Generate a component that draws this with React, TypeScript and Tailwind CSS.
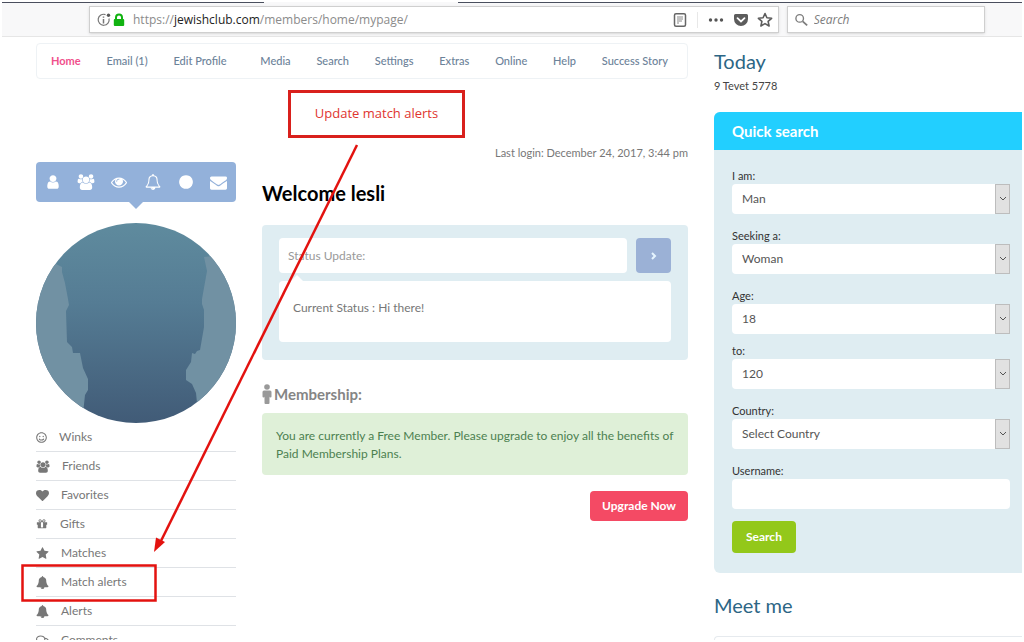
import type { ReactNode } from "react";
import { FaRegComments, FaRegSmile } from "react-icons/fa";

const BELL_BODY =
  "q0 52-38 90t-90 38h-448q0 106-75 181t-181 75-181-75-75-181h-448q-52 0-90-38t-38-90q50-42 91-88t85-119.500 74.500-158.500 50-206 19.500-260q0-152 117-282.500t307-158.500q-8-19-8-39 0-40 28-68t68-28 68 28 28 68q0 20-8 39 190 28 307 158.500t117 282.500q0 139 19.500 260t50 206 74.500 158.500 85 119.500 91 88z";
const BELL_CLAPPER =
  "M912 1696q0-16-16-16-59 0-101.500-42.500t-42.500-101.500q0-16-16-16t-16 16q0 73 51.500 124.500t124.500 51.500q16 0 16-16z";

const PATHS = {
  user: "M1536 1399q0 109-62.500 187t-150.500 78h-854q-88 0-150.500-78t-62.500-187q0-85 8.500-160.500t31.500-152 58.500-131 94-89 134.500-34.500q131 128 313 128t313-128q76 0 134.500 34.500t94 89 58.500 131 31.500 152 8.500 160.500zm-256-887q0 159-112.500 271.500t-271.500 112.500-271.500-112.500-112.500-271.500 112.500-271.500 271.500-112.500 271.500 112.500 112.500 271.500z",
  users:
    "M657 896q-162 5-265 128h-134q-82 0-138-40.500t-56-118.500q0-353 124-353 6 0 43.500 21t97.500 42.500 119 21.500q67 0 133-23-5 37-5 66 0 139 81 256zM1728 1533q0 120-73 189.500t-194 69.500h-874q-121 0-194-69.500t-73-189.500q0-53 3.500-103.500t14-109 26.500-108.500 43-97.500 62-81 85.500-53.500 111.500-20q10 0 43 21.500t73 48 107 48 135 21.500 135-21.500 107-48 73-48 43-21.500q61 0 111.500 20t85.500 53.500 62 81 43 97.500 26.500 108.500 14 109 3.500 103.500zM704 256q0 106-75 181t-181 75-181-75-75-181 75-181 181-75 181 75 75 181zM1408 640q0 159-112.500 271.500t-271.500 112.500-271.500-112.500-112.500-271.500 112.500-271.500 271.500-112.500 271.500 112.500 112.500 271.500zM1984 865q0 78-56 118.500t-138 40.500h-134q-103-123-265-128 81-117 81-256 0-29-5-66 66 23 133 23 59 0 119-21.500t97.500-42.500 43.500-21q124 0 124 353zM1856 256q0 106-75 181t-181 75-181-75-75-181 75-181 181-75 181 75 75 181z",
  eye: "M1664 960q-152-236-381-353 61 104 61 225 0 185-131.500 316.500t-316.500 131.500-316.500-131.500-131.500-316.500q0-121 61-225-229 117-381 353 133 205 333.500 326.500t434.500 121.500 434.500-121.500 333.500-326.500zm-720-384q0-20-14-34t-34-14q-125 0-214.500 89.500t-89.500 214.500q0 20 14 34t34 14 34-14 14-34q0-86 61-147t147-61q20 0 34-14t14-34zm848 384q0 34-20 69-140 230-376.500 368.500t-499.500 138.500-499.500-139-376.500-368q-20-35-20-69t20-69q140-229 376.500-368t499.500-139 499.500 139 376.500 368q20 35 20 69z",
  bellOutline:
    BELL_CLAPPER +
    "m-666-288h1300q-266-300-266-832 0-51-24-105t-69-103-121.500-80.500-169.500-31.500-169.500 31.500-121.500 80.500-69 103-24 105q0 532-266 832zm1482 0" +
    BELL_BODY,
  bell: BELL_CLAPPER + "m816-288" + BELL_BODY,
  circle:
    "M1664 896q0 209-103 385.500t-279.500 279.500-385.500 103-385.500-103-279.500-279.500-103-385.500 103-385.500 279.500-279.500 385.500-103 385.500 103 279.500 279.500 103 385.500z",
  envelope:
    "M1792 710v794q0 66-47 113t-113 47h-1472q-66 0-113-47t-47-113v-794q44 49 101 87 362 246 497 345 57 42 92.500 65.500t94.500 48 110 24.500h2q51 0 110-24.500t94.500-48 92.500-65.500q170-123 498-345 57-39 100-87zm0-294q0 79-49 151t-122 123q-376 261-468 325-10 7-42.500 31t-54 38.500-52 32.500-57.500 27-50 9h-2q-23 0-50-9t-57.500-27-52-32.500-54-38.500-42.500-31q-91-64-262-182.500t-205-142.500q-62-42-117-115.500t-55-136.500q0-78 41.500-130t118.500-52h1472q65 0 112.500 47t47.500 113z",
  heart:
    "M896 1664q-26 0-44-18l-624-602q-10-8-27.500-26t-55.500-65.500-68-97.500-53.500-121-23.500-138q0-220 127-344t351-124q62 0 126.500 21.500t120 58 95.500 68.500 76 68q36-36 76-68t95.500-68.500 120-58 126.500-21.500q224 0 351 124t127 344q0 221-229 450l-623 600q-18 18-44 18z",
  gift: "M1056 1356v-716h-320v716q0 25 18 38.500t46 13.500h192q28 0 46-13.500t18-38.500zm-456-844h195l-126-161q-26-31-69-31-40 0-68 28t-28 68 28 68 68 28zm688-96q0-40-28-68t-68-28q-43 0-69 31l-125 161h194q40 0 68-28t28-68zm376 256v320q0 14-9 23t-23 9h-96v416q0 40-28 68t-68 28h-1088q-40 0-68-28t-28-68v-416h-96q-14 0-23-9t-9-23v-320q0-14 9-23t23-9h440q-93 0-158.500-65.500t-65.500-158.500 65.500-158.500 158.500-65.500q107 0 168 77l128 165 128-165q61-77 168-77 93 0 158.500 65.500t65.500 158.500-65.500 158.500-158.500 65.500h440q14 0 23 9t9 23z",
  star: "M1728 647q0 22-26 48l-363 354 86 500q1 7 1 20 0 21-10.500 35.500t-30.500 14.500q-19 0-40-12l-449-236-449 236q-22 12-40 12-21 0-31.500-14.500t-10.500-35.500q0-6 2-20l86-500-364-354q-25-27-25-48 0-37 56-46l502-73 225-455q19-41 49-41t49 41l225 455 502 73q56 9 56 46z",
};

type IconName = keyof typeof PATHS;

function Icon({ name, className }: { name: IconName; className: string }) {
  return (
    <svg
      viewBox={name === "users" ? "0 0 2048 1792" : "0 0 1792 1792"}
      className={className}
      fill="currentColor"
      aria-hidden="true"
    >
      <path d={PATHS[name]} />
    </svg>
  );
}

function BrowserBar() {
  return (
    <header className="border-b border-[#e6e6e6] bg-[#f8f8f9]">
      <div className="flex h-px justify-between">
        <span className="w-[262px] bg-[#4a4f5e]" />
        <span className="ml-[194px] flex-1 bg-[#4a4f5e]" />
      </div>
      <div className="flex h-[33px] items-center gap-2 pr-[37px] pl-[87px]">
        <div className="flex h-[27px] flex-1 items-center border border-[#cfcfcf] bg-white pr-[5px] pl-[7px] shadow-sm">
          <svg viewBox="0 0 14 14" className="size-[14px]" fill="none" aria-hidden="true">
            <path d="M8.500 1.600A5.500 5.500 0 1 0 12 5.500" stroke="#777" strokeWidth="1.200" />
            <path d="M6.500 6v4.500M6.500 3.500v1.300" stroke="#777" strokeWidth="1.500" />
            <circle cx="11.500" cy="2.200" r="1.700" fill="#555" />
          </svg>
          <svg viewBox="0 0 12 14" className="ml-[2px] h-[14px] w-3" aria-hidden="true">
            <path d="M3 7V4.500a3 3 0 0 1 6 0V7" fill="none" stroke="#12b312" strokeWidth="2" />
            <rect x="0.800" y="6" width="10.400" height="7" rx="1" fill="#12b312" />
          </svg>
          <p className="ml-[8px] flex-1 font-['Open_Sans','Noto_Sans',sans-serif] text-[12px] text-[#8b8b8b]">
            https://<span className="text-[#222]">jewishclub.com</span>/members/home/mypage/
          </p>
          <button type="button" aria-label="Reader view">
            <svg viewBox="0 0 14 14" className="size-[14px]" fill="none" stroke="#666">
              <rect x="1.500" y="0.800" width="11" height="12.400" rx="1.500" strokeWidth="1.500" />
              <path d="M4 4h6M4 6h6M4 8h5M4 10h2" stroke="#888" />
            </svg>
          </button>
          <span className="ml-[10px] h-4 w-px bg-[#e8e8e8]" />
          <button type="button" aria-label="Page actions" className="ml-[10px]">
            <svg viewBox="0 0 16 14" className="h-[14px] w-4" fill="#555">
              <circle cx="2.500" cy="7" r="1.700" />
              <circle cx="8" cy="7" r="1.700" />
              <circle cx="13.500" cy="7" r="1.700" />
            </svg>
          </button>
          <button type="button" aria-label="Save to Pocket" className="ml-[9px]">
            <svg viewBox="0 0 16 14" className="h-[14px] w-4" fill="#5c5c5c">
              <path d="M2.500 1h11A1.500 1.500 0 0 1 15 2.500V6A7 7 0 0 1 1 6V2.500A1.500 1.500 0 0 1 2.500 1z" />
              <path d="M4.500 5.200L8 8.500l3.500-3.300" fill="none" stroke="#fff" strokeWidth="1.800" strokeLinecap="round" />
            </svg>
          </button>
          <button type="button" aria-label="Bookmark" className="ml-2">
            <svg viewBox="0 0 16 16" className="size-4" fill="none" stroke="#5c5c5c" strokeWidth="1.600" strokeLinejoin="round">
              <path d="M8 1.500l1.900 4.300 4.700.5-3.500 3.100 1 4.600L8 11.600 3.900 14l1-4.600L1.400 6.300l4.700-.5z" />
            </svg>
          </button>
        </div>
        <label className="flex h-[27px] w-[198px] items-center border border-[#cfcfcf] bg-white pl-[7px] shadow-sm">
          <svg viewBox="0 0 14 14" className="size-[14px]" fill="none" stroke="#7d7d7d" aria-hidden="true">
            <circle cx="5.200" cy="5.200" r="4.200" strokeWidth="1.500" />
            <path d="M8.500 8.500l5 4.500" strokeWidth="2" />
          </svg>
          <input
            type="search"
            aria-label="Search"
            placeholder="Search"
            className="ml-[6px] w-full min-w-0 font-['Open_Sans','Noto_Sans',sans-serif] text-[12px] italic outline-none placeholder:text-[#7d7d7d]"
          />
        </label>
      </div>
    </header>
  );
}

const NAV = ["Home", "Email (1)", "Edit Profile", "Media", "Search", "Settings", "Extras", "Online", "Help", "Success Story"];

function MainNav() {
  return (
    <nav className="flex h-9 items-center justify-between rounded border border-[#eef2f5] pr-[19px] pl-[14px] text-[11px] font-medium text-[#6c8299]">
      {NAV.map((item, i) => (
        <a key={item} href="#" className={i === 0 ? "font-bold text-[#f0508c]" : i === 3 ? "ml-2" : ""}>
          {item}
        </a>
      ))}
    </nav>
  );
}

const TOOLS: { name: IconName; label: string; size: string }[] = [
  { name: "user", label: "Profile", size: "size-4" },
  { name: "users", label: "Friends", size: "h-4 w-[18px]" },
  { name: "eye", label: "Views", size: "size-4" },
  { name: "bellOutline", label: "Alerts", size: "size-4" },
  { name: "circle", label: "Online", size: "size-4" },
  { name: "envelope", label: "Mail", size: "size-[17px]" },
];

function Avatar() {
  return (
    <svg viewBox="0 0 200 200" className="mt-[14px] w-full" role="img" aria-label="Profile photo">
      <defs>
        <linearGradient id="avatar-shade" x1="0" y1="0" x2="0" y2="1">
          <stop offset="0" stopColor="#5f8b9e" />
          <stop offset="0.400" stopColor="#557c94" />
          <stop offset="1" stopColor="#415b77" />
        </linearGradient>
        <clipPath id="avatar-clip">
          <circle cx="100" cy="100" r="100" />
        </clipPath>
      </defs>
      <g clipPath="url(#avatar-clip)">
        <rect width="200" height="200" fill="url(#avatar-shade)" />
        <path
          d="M0 46L20 41L26 44L26 49L29 60L32 76L33 82L30 88L31 119L36 124L37 130L44 130L47 145L52 156L52 167L49 172L46 200H0z"
          fill="#7191a3"
        />
        <path
          d="M200 30L168 34L171 48L166 76L166 81L168 87L168 104L164 127L161 128L159 131L156 130L155 139L150 147L150 157L156 161L160 170L163 200H200z"
          fill="#7191a3"
        />
      </g>
    </svg>
  );
}

const MENU: { label: string; icon: ReactNode }[] = [
  { label: "Winks", icon: <FaRegSmile className="size-[11px]" /> },
  { label: "Friends", icon: <Icon name="users" className="h-[13px] w-[14px]" /> },
  { label: "Favorites", icon: <Icon name="heart" className="size-[13px]" /> },
  { label: "Gifts", icon: <Icon name="gift" className="size-3" /> },
  { label: "Matches", icon: <Icon name="star" className="size-[13px]" /> },
  { label: "Match alerts", icon: <Icon name="bell" className="size-[13px]" /> },
  { label: "Alerts", icon: <Icon name="bell" className="size-[13px]" /> },
  { label: "Comments", icon: <FaRegComments className="size-[13px]" /> },
];

function Sidebar() {
  return (
    <aside className="w-[200px] shrink-0 pt-[83px]">
      <div className="flex h-10 items-center justify-between rounded bg-[#93b1da] px-2 text-white">
        {TOOLS.map((t) => (
          <button key={t.label} type="button" aria-label={t.label} className="flex w-[18px] justify-center">
            <Icon name={t.name} className={t.size} />
          </button>
        ))}
      </div>
      <svg viewBox="0 0 14 7" className="mx-auto h-[7px] w-[14px]" aria-hidden="true">
        <path d="M0 0h14L7 7z" fill="#93b1da" />
      </svg>
      <Avatar />
      <ul>
        {MENU.map((m) => (
          <li key={m.label} className="border-b border-[#dfe2e6]">
            <a href="#" className="flex h-7 items-center gap-3 text-[12px] text-[#777]">
              {m.icon}
              {m.label}
            </a>
          </li>
        ))}
      </ul>
    </aside>
  );
}

function Content() {
  return (
    <main className="min-w-0 flex-1 pt-[66px]">
      <p className="text-right text-[11px] leading-[16px] text-[#777]">Last login: December 24, 2017, 3:44 pm</p>
      <h1 className="mt-[18px] text-[20px] leading-[28px] font-bold text-black">Welcome lesli</h1>
      <section className="mt-[18px] rounded bg-[#dfedf2] px-[17px] pt-[13px] pb-[18px] text-[12px]">
        <form className="flex gap-[9px]" onSubmit={(e) => e.preventDefault()}>
          <input
            type="text"
            aria-label="Status Update"
            placeholder="Status Update:"
            className="h-[35px] min-w-0 flex-1 rounded bg-white px-[9px] outline-none placeholder:text-[#999]"
          />
          <button type="submit" aria-label="Update status" className="flex size-[35px] items-center justify-center rounded bg-[#9bb1d6]">
            <svg viewBox="0 0 8 8" className="size-2" fill="none" stroke="#e6f5ff" strokeWidth="2">
              <path d="M2 1l3 3-3 3" />
            </svg>
          </button>
        </form>
        <svg viewBox="0 0 12 6" className="mt-[2px] ml-3 h-[6px] w-3" aria-hidden="true">
          <path d="M0 6l6-6 6 6z" fill="#fff" />
        </svg>
        <p className="h-[61px] rounded bg-white px-[14px] pt-[18px] leading-[18px] text-[#777]">Current Status : Hi there!</p>
      </section>
      <h2 className="mt-[22px] flex h-6 items-center gap-[2px] text-[15px] font-bold text-[#858585]">
        <svg viewBox="0 0 10 20" className="h-5 w-[10px]" fill="#999" aria-hidden="true">
          <circle cx="5" cy="3" r="2.800" />
          <path d="M2 6.500h6A1.500 1.500 0 0 1 9.500 8v4.500a1 1 0 0 1-2 0V19a1 1 0 0 1-1 1h-3a1 1 0 0 1-1-1v-6.500a1 1 0 0 1-2 0V8A1.500 1.500 0 0 1 2 6.500z" />
        </svg>
        Membership:
      </h2>
      <p className="mt-[7px] rounded-sm bg-[#dff0d8] pt-[14px] pr-2 pb-3 pl-[14px] text-[12px] leading-[18px] text-[#4c8050]">
        You are currently a Free Member. Please upgrade to enjoy all the benefits of Paid Membership Plans.
      </p>
      <div className="mt-4 flex justify-end">
        <button type="button" className="h-[30px] rounded bg-[#f44a64] px-3 text-[12px] font-bold text-white">
          Upgrade Now
        </button>
      </div>
    </main>
  );
}

const AGES = ["18", "120"];
const FIELDS = [
  { id: "i-am", label: "I am:", value: "Man", options: ["Man", "Woman"], gap: "mb-[14px]" },
  { id: "seeking", label: "Seeking a:", value: "Woman", options: ["Man", "Woman"], gap: "mb-[14px]" },
  { id: "age-from", label: "Age:", value: "18", options: AGES, gap: "mb-[9px]" },
  { id: "age-to", label: "to:", value: "120", options: AGES, gap: "mb-[14px]" },
  { id: "country", label: "Country:", value: "Select Country", options: ["Select Country"], gap: "mb-[14px]" },
];

function QuickSearch() {
  return (
    <section className="mt-[18px] rounded-l-md bg-[#dfedf2]">
      <h2 className="flex h-[38px] items-center rounded-tl-md bg-[#22cfff] px-[18px] text-[15px] font-bold text-white">Quick search</h2>
      <form className="pt-[18px] pr-3 pb-[20px] pl-[18px]" onSubmit={(e) => e.preventDefault()}>
        {FIELDS.map((f) => (
          <div key={f.id} className={f.gap}>
            <label htmlFor={f.id} className="block text-[11px] leading-[16px] text-[#333]">
              {f.label}
            </label>
            <div className="relative">
              <select
                id={f.id}
                defaultValue={f.value}
                className="block h-[30px] w-full appearance-none rounded-sm bg-white pl-[10px] text-[12px] text-[#555] outline-none"
              >
                {f.options.map((o) => (
                  <option key={o}>{o}</option>
                ))}
              </select>
              <span className="pointer-events-none absolute inset-y-0 right-0 flex w-[15px] items-center justify-center border border-[#bdbdbd] bg-[#e1e1e1]">
                <svg viewBox="0 0 8 6" className="h-[6px] w-2" fill="none" stroke="#555">
                  <path d="M1 1l3 3 3-3" />
                </svg>
              </span>
            </div>
          </div>
        ))}
        <label htmlFor="username" className="block text-[11px] leading-[16px] text-[#333]">
          Username:
        </label>
        <input id="username" type="text" className="block h-[30px] w-full rounded-sm bg-white px-[10px] text-[12px] outline-none" />
        <button type="submit" className="mt-3 h-8 rounded bg-[#93c81a] px-[14px] text-[12px] font-bold text-white">
          Search
        </button>
      </form>
    </section>
  );
}

function RightColumn() {
  return (
    <aside className="w-[308px] shrink-0 pt-[5px]">
      <h2 className="text-[20px] leading-[26px] text-[#2c6685]">Today</h2>
      <p className="mt-1 text-[11px] leading-[16px] text-[#444]">9 Tevet 5778</p>
      <QuickSearch />
      <h2 className="mt-[19px] text-[20px] leading-[26px] text-[#2c6685]">Meet me</h2>
      <div className="mt-[18px] h-10 rounded-tl border-t border-l border-[#e6eaee]" />
    </aside>
  );
}

function Annotations() {
  return (
    <>
      <svg className="pointer-events-none absolute top-0 left-0 h-[640px] w-[700px]" viewBox="2 2 700 640" aria-hidden="true">
        <path d="M357 145L159 545" stroke="#e3120f" strokeWidth="2.500" />
        <path d="M154 552L156 537.500L165 542z" fill="#e3120f" />
        <rect x="22.500" y="565.500" width="133" height="35" fill="none" stroke="#e3120f" strokeWidth="2.500" />
      </svg>
      <p className="absolute top-[88px] left-[286px] flex h-12 w-[177px] items-center justify-center border-[3px] border-[#d9201c] bg-white font-['Open_Sans','Noto_Sans',sans-serif] text-[13px] text-[#e0352f]">
        Update match alerts
      </p>
    </>
  );
}

export default function App() {
  return (
    <div className="relative h-screen overflow-hidden border-2 border-white bg-white font-['Lato',sans-serif]">
      <BrowserBar />
      <div className="flex gap-[26px] pt-[6px] pl-[34px]">
        <div className="min-w-0 flex-1">
          <MainNav />
          <div className="flex gap-[26px]">
            <Sidebar />
            <Content />
          </div>
        </div>
        <RightColumn />
      </div>
      <Annotations />
    </div>
  );
}
